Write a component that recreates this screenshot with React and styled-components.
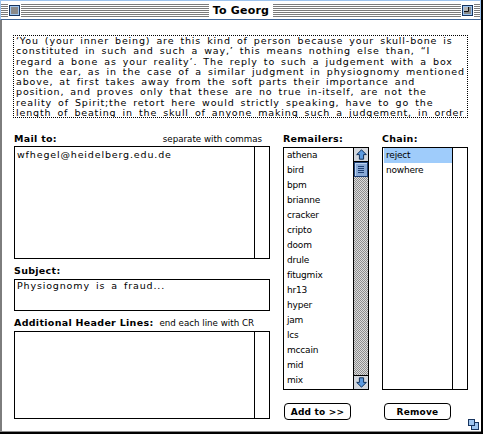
import React from 'react'
import styled, { createGlobalStyle } from 'styled-components'

const GlobalStyle = createGlobalStyle`
  html, body {
    margin: 0;
    padding: 0;
    background: #fff;
  }
  body {
    font-family: "DejaVu Sans", Verdana, sans-serif;
    color: #000;
  }
`

const quote = [
  '\u2018You (your inner being) are this kind of person because your skull-bone is',
  'constituted in such and such a way,\u2019 this means nothing else than, \u201cI',
  'regard a bone as your reality\u2019. The reply to such a judgement with a box',
  'on the ear, as in the case of a similar judgment in physiognomy mentioned',
  'above, at first takes away from the soft parts their importance and',
  'position, and proves only that these are no true in-itself, are not the',
  'reality of Spirit;the retort here would strictly speaking, have to go the',
  'length of beating in the skull of anyone making such a judgement, in order',
]

const remailers = [
  'athena', 'bird', 'bpm', 'brianne', 'cracker', 'cripto', 'doom', 'drule',
  'fitugmix', 'hr13', 'hyper', 'jam', 'lcs', 'mccain', 'mid', 'mix',
]

const chain = ['reject', 'nowhere']

const Window = styled.div`
  width: 483px;
  height: 434px;
  box-sizing: border-box;
  border-right: 2px solid #000;
  border-bottom: 2px solid #000;
  display: flex;
  flex-direction: column;
  background: #fff;
`

const TitleBar = styled.div`
  flex: none;
  height: 20px;
  box-sizing: border-box;
  border: 1px solid #9dc3ee;
  border-bottom: 1px solid #3d6498;
  padding: 0 7px 0 8px;
  display: flex;
  align-items: flex-start;
  background: #fff repeating-linear-gradient(to bottom, #7b7b7b 0 1px, #fff 1px 2px) 0 3px / 100% 13px no-repeat;
`

const BoxIcon = styled.svg`
  display: block;
  flex: none;
  margin-top: 4px;
  box-shadow: 0 0 0 1px #fff;
  background: #fff;
`

const TitleSpace = styled.div`
  flex: 1;
  display: flex;
  justify-content: center;
`

const TitleText = styled.div`
  margin-top: 3px;
  padding: 0 4px;
  background: #fff;
  font-size: 11px;
  line-height: 14px;
  font-weight: bold;
  letter-spacing: 0.2px;
`

const Body = styled.div`
  flex: 1;
  position: relative;
  border-left: 2px solid #7d7d7d;
  border-bottom: 1px solid #8a8a8a;
  padding: 15px 12px 0 11px;
  display: flex;
  flex-direction: column;
`

const QuoteBox = styled.div`
  width: 455px;
  height: 83px;
  box-sizing: border-box;
  border: 1px dotted #000;
  padding: 0 2px;
  overflow: hidden;
`

const Typed = styled.div`
  font-size: 9.5px;
  letter-spacing: 0.85px;
  word-spacing: 2.2px;
  white-space: pre;
`

const QuoteLine = styled(Typed)`
  line-height: 10.3px;
`

const Columns = styled.div`
  margin: 15px 0 0 1px;
  display: flex;
  gap: 13px;
`

const Column = styled.div`
  width: ${p => p.$width}px;
  display: flex;
  flex-direction: column;
`

const LabelRow = styled.div`
  margin-top: ${p => p.$top || 0}px;
  padding-right: ${p => p.$inset || 0}px;
  height: 12px;
  display: flex;
  align-items: baseline;
  justify-content: space-between;
`

const Label = styled.span`
  font-size: 9.5px;
  line-height: 12px;
  font-weight: bold;
  letter-spacing: 0.3px;
  white-space: pre;
`

const Hint = styled.span`
  font-size: 8.7px;
  line-height: 12px;
  white-space: pre;
`

const TextBox = styled.div`
  margin-top: ${p => p.$top}px;
  height: ${p => p.$height}px;
  box-sizing: border-box;
  border: 1px solid #000;
  display: flex;
`

const TextArea = styled.div`
  flex: 1;
  padding: ${p => p.$pad || 0}px 2px 0;
  line-height: ${p => p.$line || 12}px;
`

const PlainScroll = styled.div`
  width: 14px;
  border-left: 1px solid #000;
`

const ListBox = styled.div`
  margin-top: 2px;
  height: 243px;
  box-sizing: border-box;
  border: 1px solid #000;
  display: flex;
`

const Items = styled.div`
  flex: 1;
  overflow: hidden;
`

const Item = styled.div`
  height: 15px;
  line-height: 15px;
  margin-left: ${p => (p.$inset ? 1 : 0)}px;
  padding-left: ${p => (p.$inset ? 2 : 3)}px;
  font-size: 9px;
  letter-spacing: -0.2px;
  background: ${p => (p.$selected ? '#9fccfb' : 'transparent')};
`

const ScrollBar = styled.div`
  width: 14px;
  border-left: 1px solid #000;
  display: flex;
  flex-direction: column;
`

const ArrowBox = styled.div`
  height: 13px;
  background: #d4d8de;
  border-top: ${p => (p.$down ? '1px solid #000' : 'none')};
  border-bottom: ${p => (p.$down ? 'none' : '1px solid #000')};
  display: flex;
  align-items: center;
  justify-content: center;
`

const Thumb = styled.div`
  height: 15px;
  box-sizing: border-box;
  border: 1px solid #1e3f73;
  background: #88a9d6;
  box-shadow: inset 1px 1px 0 #bcd3f0;
  display: flex;
  align-items: center;
  justify-content: center;
`

const Track = styled.div`
  flex: 1;
  background: repeating-conic-gradient(#8e8e8e 0 25%, #dcdcdc 0 50%) 0 0 / 2px 2px;
`

const Button = styled.button`
  margin: 13px 0 0 ${p => p.$left}px;
  width: 67px;
  height: 17px;
  box-sizing: border-box;
  padding: 0;
  border: 1px solid #000;
  border-radius: 4px;
  background: #fff;
  font-family: "DejaVu Sans", Verdana, sans-serif;
  font-size: 9px;
  font-weight: bold;
  letter-spacing: 0.2px;
  color: #000;
`

const Grow = styled.svg`
  position: absolute;
  right: 2px;
  bottom: 1px;
`

function CloseBox() {
  return (
    <BoxIcon width="11" height="11" viewBox="0 0 11 11">
      <rect x="0.5" y="0.5" width="10" height="10" fill="#9fc6f0" stroke="#17345f" />
      <rect x="2" y="2" width="7" height="7" fill="#8a8a8a" />
    </BoxIcon>
  )
}

function ZoomBox() {
  return (
    <BoxIcon width="11" height="11" viewBox="0 0 11 11">
      <rect x="0.5" y="0.5" width="10" height="10" fill="#9fc6f0" stroke="#17345f" />
      <rect x="2" y="2" width="7" height="7" fill="#8a8a8a" />
      <rect x="2" y="2" width="5" height="5" fill="#b4b4b4" />
      <path d="M2 6.5 H6.5 V2" fill="none" stroke="#111" />
    </BoxIcon>
  )
}

function Arrow({ down }) {
  return (
    <svg width="11" height="11" viewBox="0 0 11 11" style={down ? { transform: 'rotate(180deg)' } : undefined}>
      <path d="M5.5 0.8 L10.3 5.6 H7.6 V10.2 H3.4 V5.6 H0.7 Z" fill="#5d9be0" stroke="#10305a" strokeWidth="1" />
    </svg>
  )
}

function Grip() {
  return (
    <svg width="8" height="9" viewBox="0 0 8 9">
      <path d="M1 1.5 H7 M1 3.5 H7 M1 5.5 H7 M1 7.5 H7" stroke="#1e3f73" strokeWidth="1" />
    </svg>
  )
}

export default function App() {
  return (
    <>
      <GlobalStyle />
      <Window>
        <TitleBar>
          <CloseBox />
          <TitleSpace>
            <TitleText>To Georg</TitleText>
          </TitleSpace>
          <ZoomBox />
        </TitleBar>
        <Body>
          <QuoteBox>
            {quote.map(line => (
              <QuoteLine key={line}>{line}</QuoteLine>
            ))}
          </QuoteBox>
          <Columns>
            <Column $width={256}>
              <LabelRow $inset={8}>
                <Label>Mail to:</Label>
                <Hint>separate with commas</Hint>
              </LabelRow>
              <TextBox $top={1} $height={113}>
                <TextArea $pad={2}>
                  <Typed>wfhegel@heidelberg.edu.de</Typed>
                </TextArea>
                <PlainScroll />
              </TextBox>
              <LabelRow $top={6}>
                <Label>Subject:</Label>
              </LabelRow>
              <TextBox $top={2} $height={32}>
                <TextArea $line={11}>
                  <Typed>Physiognomy is a fraud...</Typed>
                </TextArea>
              </TextBox>
              <LabelRow $top={6} $inset={16}>
                <Label>Additional Header Lines:</Label>
                <Hint>end each line with CR</Hint>
              </LabelRow>
              <TextBox $top={2} $height={88}>
                <TextArea />
                <PlainScroll />
              </TextBox>
            </Column>
            <Column $width={86}>
              <LabelRow>
                <Label>Remailers:</Label>
              </LabelRow>
              <ListBox>
                <Items>
                  {remailers.map(name => (
                    <Item key={name}>{name}</Item>
                  ))}
                </Items>
                <ScrollBar>
                  <ArrowBox>
                    <Arrow />
                  </ArrowBox>
                  <Thumb>
                    <Grip />
                  </Thumb>
                  <Track />
                  <ArrowBox $down>
                    <Arrow down />
                  </ArrowBox>
                </ScrollBar>
              </ListBox>
              <Button $left={1}>Add to &gt;&gt;</Button>
            </Column>
            <Column $width={86}>
              <LabelRow>
                <Label>Chain:</Label>
              </LabelRow>
              <ListBox>
                <Items>
                  {chain.map((name, i) => (
                    <Item key={name} $inset $selected={i === 0}>{name}</Item>
                  ))}
                </Items>
                <PlainScroll />
              </ListBox>
              <Button $left={2}>Remove</Button>
            </Column>
          </Columns>
          <Grow width="11" height="11" viewBox="0 0 11 11">
            <rect x="3.5" y="3.5" width="7" height="7" fill="#9fc6f0" stroke="#17345f" />
            <rect x="0.5" y="0.5" width="6" height="6" fill="#9fc6f0" stroke="#17345f" />
          </Grow>
        </Body>
      </Window>
    </>
  )
}
